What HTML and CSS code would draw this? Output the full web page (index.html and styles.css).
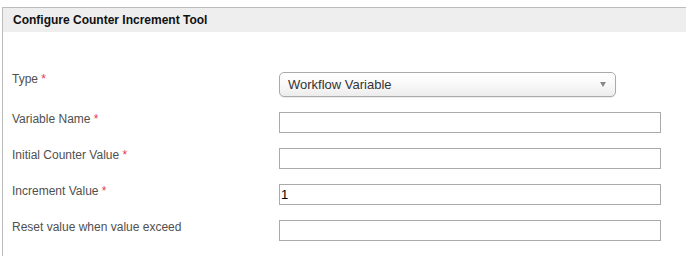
FILE: index.html
```html
<!DOCTYPE html>
<html lang="en">
<head>
    <meta charset="UTF-8">
    <title>Configure Counter Increment Tool</title>
    <link rel="stylesheet" href="styles.css">
</head>
<body>
    <div class="panel">
        <div class="panel-header">Configure Counter Increment Tool</div>

        <div class="form">
            <div class="form-row">
                <label class="form-label">Type <span class="required">*</span></label>
                <div class="select-box">
                    <span class="select-text">Workflow Variable</span>
                    <span class="select-arrow"></span>
                </div>
            </div>

            <div class="form-row">
                <label class="form-label">Variable Name <span class="required">*</span></label>
                <input type="text" class="text-input">
            </div>

            <div class="form-row">
                <label class="form-label">Initial Counter Value <span class="required">*</span></label>
                <input type="text" class="text-input">
            </div>

            <div class="form-row">
                <label class="form-label">Increment Value <span class="required">*</span></label>
                <input type="text" class="text-input" value="1">
            </div>

            <div class="form-row">
                <label class="form-label">Reset value when value exceed</label>
                <input type="text" class="text-input">
            </div>
        </div>
    </div>
</body>
</html>
```

FILE: styles.css
```css
* {
    margin: 0;
    padding: 0;
    box-sizing: border-box;
}

body {
    font-family: "Liberation Sans", Arial, sans-serif;
    background: white;
    margin: 7px 0 0 2px;
    overflow: hidden;
}

.panel {
    width: 720px;
    min-height: 260px;
    border-top: 1px solid #bcbcbc;
    border-left: 1px solid #bcbcbc;
}

.panel-header {
    background: #eeeeee;
    height: 24px;
    line-height: 24px;
    padding-left: 10px;
    font-size: 12px;
    font-weight: bold;
    color: #111;
}

.form {
    padding: 40px 0 0 9px;
    display: flex;
    flex-direction: column;
    gap: 15px;
}

.form-row {
    display: flex;
    align-items: flex-start;
}

.form-label {
    width: 267px;
    font-size: 12px;
    line-height: 14px;
    color: #505050;
}

.required {
    color: #e8364f;
}

.select-box {
    width: 337px;
    height: 25px;
    border: 1px solid #aaa;
    border-radius: 5px;
    background: linear-gradient(to bottom, #ffffff 0%, #f9f9f9 50%, #ececec 100%);
    box-shadow: 0 1px 1px rgba(0, 0, 0, 0.08);
    display: flex;
    align-items: center;
    justify-content: space-between;
    padding: 0 9px 0 8px;
}

.select-text {
    font-size: 13px;
    color: #333;
}

.select-arrow {
    width: 0;
    height: 0;
    border-left: 3.5px solid transparent;
    border-right: 3.5px solid transparent;
    border-top: 5px solid #888;
}

.text-input {
    width: 382px;
    height: 21px;
    border: 1px solid #aaa;
    padding: 0 1px;
    font-family: "Liberation Sans", Arial, sans-serif;
    font-size: 13px;
    color: #000;
    outline: none;
}
```
